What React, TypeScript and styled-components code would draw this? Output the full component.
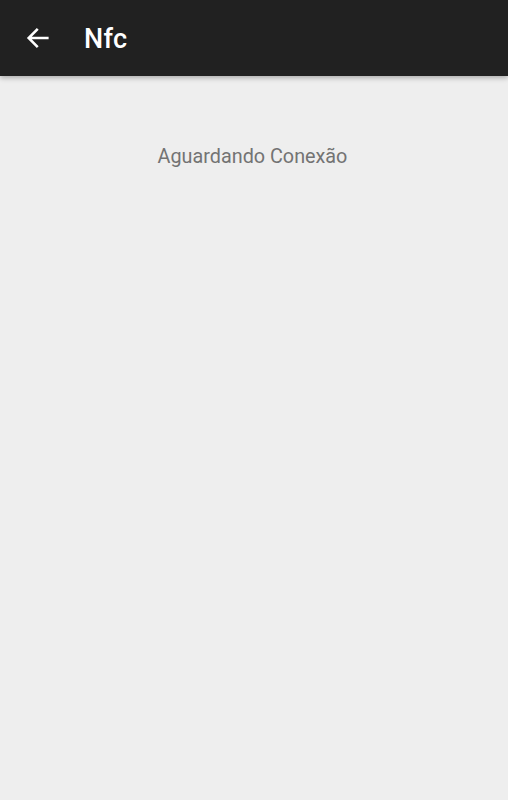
import * as React from 'react';
import styled, { createGlobalStyle } from 'styled-components';

const GlobalStyle = createGlobalStyle`
  html, body {
    margin: 0;
    padding: 0;
    height: 100%;
    background: #eeeeee;
    font-family: Roboto, "Noto Sans", sans-serif;
  }
  #root {
    height: 100%;
  }
`;

const Screen = styled.div`
  display: flex;
  flex-direction: column;
  height: 100vh;
  background: #eeeeee;
`;

const Toolbar = styled.header`
  display: flex;
  align-items: center;
  height: 76px;
  padding: 0 0 0 24px;
  background: #212121;
  box-shadow: 0 2px 5px rgba(0, 0, 0, 0.28);
  position: relative;
  z-index: 1;
`;

const BackButton = styled.button`
  display: flex;
  align-items: center;
  justify-content: center;
  width: 28px;
  height: 28px;
  padding: 0;
  margin-right: 32px;
  border: none;
  background: transparent;
  color: #ffffff;
  cursor: pointer;
`;

const Title = styled.h1`
  margin: 2px 0 0;
  font-size: 27px;
  font-weight: 500;
  color: #ffffff;
  letter-spacing: 0.3px;
`;

const Content = styled.main`
  display: flex;
  justify-content: center;
  padding: 69px 3px 0 0;
`;

const Status = styled.p`
  margin: 0;
  font-size: 19.8px;
  color: #737373;
`;

export default function App() {
  return (
    <>
      <GlobalStyle />
      <Screen>
        <Toolbar>
          <BackButton aria-label="Voltar">
            <svg width="28" height="28" viewBox="0 0 24 24" fill="none">
              <path
                d="M20 12H4.5M11 5l-7 7 7 7"
                stroke="#ffffff"
                strokeWidth="2.2"
                strokeLinecap="square"
              />
            </svg>
          </BackButton>
          <Title>Nfc</Title>
        </Toolbar>
        <Content>
          <Status>Aguardando Conexão</Status>
        </Content>
      </Screen>
    </>
  );
}
